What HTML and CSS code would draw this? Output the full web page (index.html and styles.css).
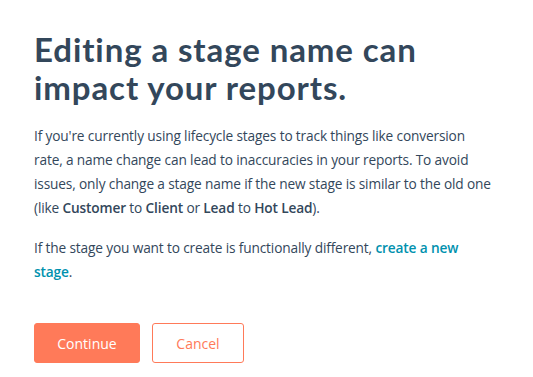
FILE: index.html
```html
<!DOCTYPE html>
<html lang="en">
<head>
  <meta charset="UTF-8" />
  <meta name="viewport" content="width=device-width, initial-scale=1.0"/>
  <title>Edit stage name</title>
  <link rel="stylesheet" href="styles.css">
</head>
<body>
  <div class="dialog">
    <h1>Editing a stage name can impact your reports.</h1>
    <p>If you're currently using lifecycle stages to track things like conversion rate, a name change can lead to inaccuracies in your reports. To avoid issues, only change a stage name if the new stage is similar to the old one (like <strong>Customer</strong> to <strong>Client</strong> or <strong>Lead</strong> to <strong>Hot Lead</strong>).</p>
    <p>If the stage you want to create is functionally different, <a href="#">create a new stage</a>.</p>
    <div class="actions">
      <button class="btn btn-primary">Continue</button>
      <button class="btn btn-secondary">Cancel</button>
    </div>
  </div>
</body>
</html>
```
FILE: styles.css
```css
* { margin: 0; padding: 0; box-sizing: border-box; }
body {
  font-family: Lato, "Noto Sans", sans-serif;
  background: #fff;
  color: #33475b;
}
.dialog {
  padding: 30px 34px;
  width: 533px;
}
h1 {
  font-size: 33px;
  line-height: 38px;
  font-weight: 700;
  letter-spacing: 0.9px;
  color: #33475b;
  margin-bottom: 18px;
  max-width: 440px;
}
p {
  font-family: "Open Sans", Lato, sans-serif;
  font-size: 13.7px;
  line-height: 24px;
  letter-spacing: -0.15px;
  margin-bottom: 16px;
  max-width: 459.5px;
}
strong { font-weight: 600; }
a {
  color: #0091ae;
  font-weight: 600;
  text-decoration: none;
}
.actions {
  display: flex;
  gap: 12px;
  margin-top: 39px;
}
.btn {
  height: 40px;
  border-radius: 3px;
  font-family: "Open Sans", Lato, sans-serif;
  font-size: 14px;
  cursor: pointer;
}
.btn-primary {
  width: 106px;
  background: #ff7a59;
  border: 1px solid #ff7a59;
  color: #fff;
}
.btn-secondary {
  width: 92px;
  background: #fff;
  border: 1px solid #ff7a59;
  color: #ff7a59;
}
```
